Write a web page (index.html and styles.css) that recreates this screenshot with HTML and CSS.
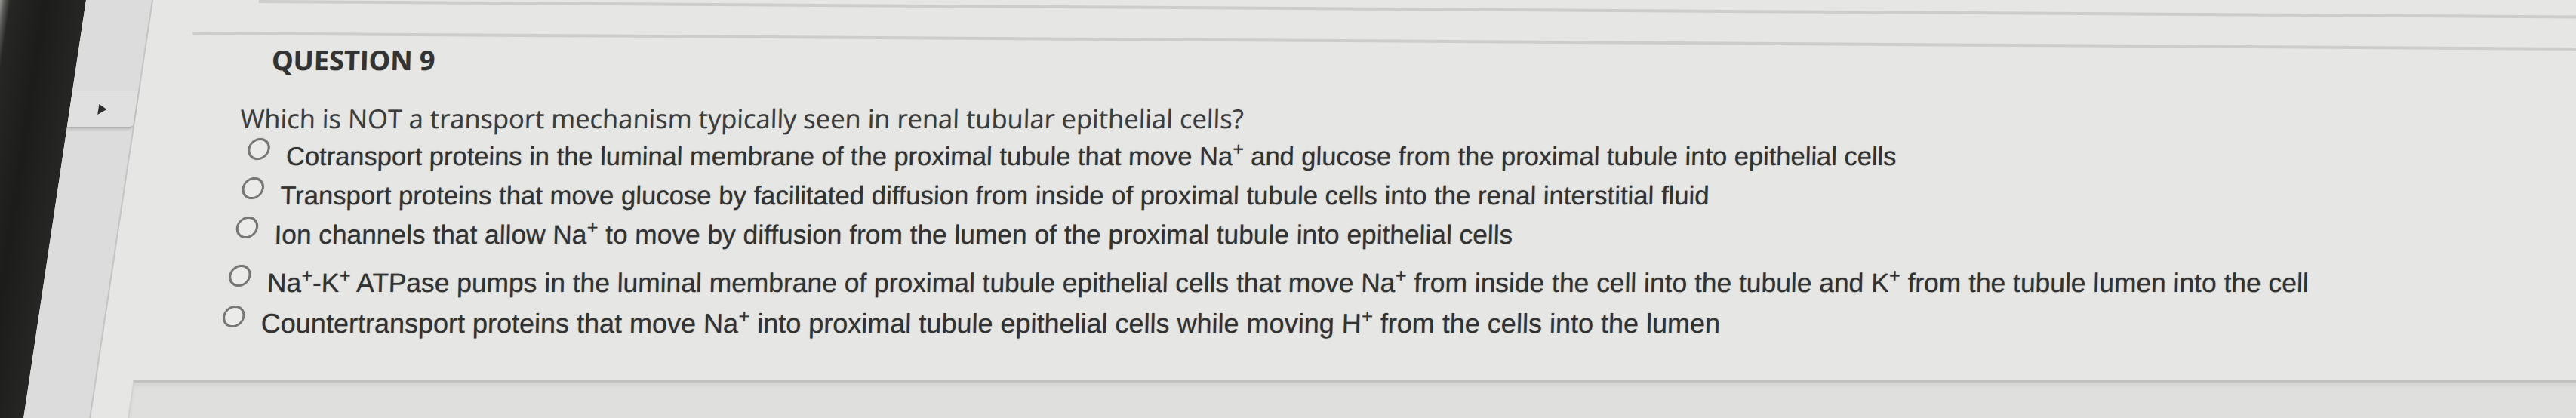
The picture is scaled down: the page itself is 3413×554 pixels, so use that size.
FILE: index.html
```html
<!DOCTYPE html>
<html lang="en">
<head>
<meta charset="utf-8">
<title>Question 9</title>
<link rel="stylesheet" href="styles.css">
</head>
<body>
<div class="screen">
  <div class="bezel"></div>
  <aside class="sidebar">
    <button class="toggle" type="button" aria-label="Expand"><span class="arrow"></span></button>
  </aside>
  <main class="main">
    <div class="rule rule-prev"></div>
    <section class="question">
      <div class="rule rule-top"></div>
      <h2 class="q-title upright">QUESTION 9</h2>
      <p class="q-text upright">Which is NOT a transport mechanism typically seen in renal tubular epithelial cells?</p>
      <ul class="options">
        <li class="opt opt-1"><span class="radio"></span><span class="opt-text upright">Cotransport proteins in the luminal membrane of the proximal tubule that move Na<sup class="ion">+</sup> and glucose from the proximal tubule into epithelial cells</span></li>
        <li class="opt opt-2"><span class="radio"></span><span class="opt-text upright">Transport proteins that move glucose by facilitated diffusion from inside of proximal tubule cells into the renal interstitial fluid</span></li>
        <li class="opt opt-3"><span class="radio"></span><span class="opt-text upright">Ion channels that allow Na<sup class="ion">+</sup> to move by diffusion from the lumen of the proximal tubule into epithelial cells</span></li>
        <li class="opt opt-4"><span class="radio"></span><span class="opt-text upright">Na<sup class="ion">+</sup>-K<sup class="ion">+</sup> ATPase pumps in the luminal membrane of proximal tubule epithelial cells that move Na<sup class="ion">+</sup> from inside the cell into the tubule and K<sup class="ion">+</sup> from the tubule lumen into the cell</span></li>
        <li class="opt opt-5"><span class="radio"></span><span class="opt-text upright">Countertransport proteins that move Na<sup class="ion">+</sup> into proximal tubule epithelial cells while moving H<sup class="ion">+</sup> from the cells into the lumen</span></li>
      </ul>
    </section>
    <div class="answer-box"></div>
  </main>
</div>
</body>
</html>
```

FILE: styles.css
```css
html, body {
  margin: 0;
  height: 100%;
}
body {
  background: #e6e6e4;
  overflow: hidden;
  font-family: "Liberation Sans", Arial, sans-serif;
}
.screen {
  display: flex;
  width: 3560px;
  height: 554px;
  transform: skewX(-8.5deg);
  transform-origin: 0 0;
}
.upright {
  transform: skewX(7deg);
}
.bezel {
  flex: none;
  width: 114px;
  background: linear-gradient(90deg, #9a9a95 0, #5a5a57 6px, #262725 14px, #1c1d1b 60px, #262725 100%);
}
.sidebar {
  flex: none;
  width: 87px;
  background: #dddcdc;
  border-right: 2px solid #c4c4c4;
}
.toggle {
  display: flex;
  align-items: center;
  justify-content: center;
  width: 100%;
  height: 50px;
  margin-top: 120px;
  padding: 0;
  border: 0;
  border-top: 1px solid #ebebeb;
  border-bottom: 2px solid #b2b2b2;
  border-radius: 0 0 5px 0;
  background: #e1e0e0;
  box-shadow: 0 2px 3px rgba(0, 0, 0, 0.12);
}
.arrow {
  width: 0;
  height: 0;
  border-top: 7px solid transparent;
  border-bottom: 7px solid transparent;
  border-left: 11px solid #2c2c2c;
}
.main {
  flex: 1;
  min-width: 0;
}
.rule {
  height: 4px;
  background: #cdcdcb;
  transform: rotate(0.38deg);
  transform-origin: 0 50%;
}
.rule-prev {
  margin-left: 140px;
}
.question {
  margin: 38px 0 0 59px;
}
.q-title {
  margin: 12px 0 0;
  padding-left: 110px;
  font-family: "Open Sans", sans-serif;
  font-weight: 700;
  font-size: 36px;
  line-height: 44px;
  color: #333;
  text-shadow: 0 0 1px rgba(40, 40, 40, 0.5);
}
.q-text {
  margin: 33px 0 0;
  padding-left: 80px;
  font-family: "Open Sans", sans-serif;
  font-size: 34.5px;
  line-height: 44px;
  color: #3c3c3c;
  text-shadow: 0 0 1px rgba(40, 40, 40, 0.45);
}
.options {
  list-style: none;
  margin: 2px 0 0;
  padding: 0 0 0 96px;
}
.opt {
  display: flex;
  align-items: flex-start;
  gap: 23px;
  font-size: 34.5px;
  line-height: 52px;
  color: #323232;
  white-space: nowrap;
  text-shadow: 0 0 1.2px rgba(30, 30, 30, 0.55);
}
.opt-2 {
  font-size: 34.7px;
}
.opt-3 {
  font-size: 35.3px;
}
.opt-4 {
  margin-top: 12px;
  font-size: 35.4px;
}
.opt-5 {
  margin-top: 2px;
  font-size: 36px;
}
.radio {
  flex: none;
  width: 23px;
  height: 23px;
  margin-top: 2px;
  border: 3px solid #777;
  border-radius: 50%;
  background: #ebebea;
  box-shadow: 0 0 1px rgba(60, 60, 60, 0.4);
}
.ion {
  font-size: 0.72em;
  line-height: 0;
  vertical-align: 0.52em;
}
.answer-box {
  height: 60px;
  margin: 49px 0 0 49px;
  background: #dfdfdd;
  border-top: 3px solid #c2c2c0;
  border-left: 2px solid #d2d2d0;
  box-shadow: inset 0 4px 5px rgba(0, 0, 0, 0.05);
}
```
